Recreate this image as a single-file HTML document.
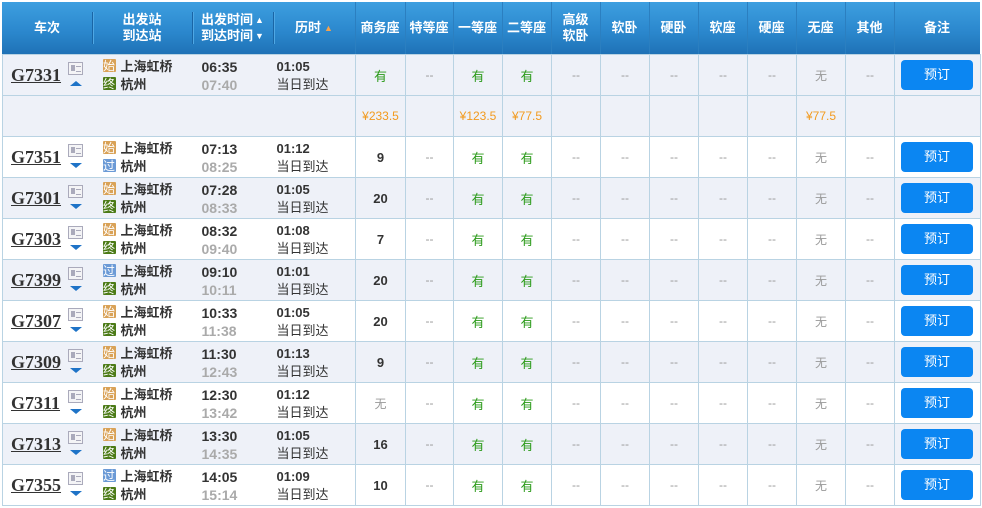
<!DOCTYPE html>
<html><head><meta charset="utf-8"><style>
*{margin:0;padding:0;box-sizing:border-box}
body{width:982px;height:508px;background:#fff;overflow:hidden;font-family:"Liberation Sans","Noto Sans CJK SC",sans-serif;position:relative}
.hd{position:absolute;left:2px;top:2px;width:978px;height:52px;background:linear-gradient(#3d9fe0,#2a86cc 60%,#1f72b6);}
.hc{position:absolute;top:0;height:52px;display:flex;align-items:center;justify-content:center;text-align:center;color:#fff;font-weight:bold;font-size:13px;line-height:16px}
.sep{position:absolute;top:10px;width:1px;height:32px;background:#1a65a5;box-shadow:1px 0 0 #4fa8e4}
.hsep{position:absolute;top:0;width:1px;height:52px;background:#2b7fc0}
table{position:absolute;left:2px;top:54px;border-collapse:collapse;table-layout:fixed;width:978px}
td{height:41px;border-top:1px solid #b9d3e3;border-bottom:1px solid #b9d3e3;font-size:12px;color:#999;text-align:center;padding:0;vertical-align:middle}
td.s{border-left:1px solid #b9d3e3}
tr.l td{background:#eef1f8}
.g{color:#2a9a18;font-size:13px}
.n{color:#333;font-weight:bold;font-size:13px}
.p{color:#f29a1e;font-size:12px}
.tn{position:relative;text-align:left}
.tn b{position:absolute;left:8px;top:10px;font-family:"Liberation Serif",serif;font-weight:bold;font-size:18px;color:#333;text-decoration:underline}
.ic{position:absolute;left:65px;top:7px;width:15px;height:13px;border:1px solid #aab;background:#f4f4f6}
.ic:before{content:"";position:absolute;left:2px;top:2px;width:4px;height:6px;background:#aab}
.ic:after{content:"";position:absolute;left:7px;top:3px;width:5px;height:4px;border-top:1px solid #aab;border-bottom:1px solid #aab}
.ar{position:absolute;left:67px;top:26px;width:0;height:0;border-left:6px solid transparent;border-right:6px solid transparent;border-top:5px solid #1e73c7}
.ar.u{border-top:0;border-bottom:5px solid #1e73c7}
.st{text-align:left;position:relative}
.st div{position:absolute;left:10px;font-size:13px;font-weight:bold;color:#333;line-height:18px;white-space:nowrap}
.st div:first-child{top:3px}.st div:last-child{top:21px}
.bg{display:inline-block;width:13px;height:13px;color:#fff;font-size:12px;line-height:13px;text-align:center;margin-right:5px;vertical-align:-1px;font-weight:normal;border-radius:1px;font-family:"Noto Sans CJK SC",sans-serif;overflow:hidden}
.b1{background:#d9a257}.b2{background:#4c7b17}.b3{background:#6b9ad6}
.tm{text-align:left;position:relative}
.tm div{position:absolute;left:9px;font-size:14px;font-weight:bold;line-height:18px}
.tm div:first-child{top:3px;color:#333}.tm div:last-child{top:21px;color:#aaa}
.du{text-align:left;position:relative}
.du div{position:absolute;left:3px;line-height:18px;color:#333}
.du div:first-child{top:3px;font-weight:bold;font-size:13px}.du div:last-child{top:21px;font-size:13px}
.btn{display:block;margin:0 auto 0 6px;width:72px;height:30px;background:#0b86f2;color:#fff;border-radius:4px;line-height:30px;font-size:13px}
</style></head><body>
<div class="hd">
<div class="hc" style="left:0;width:90px">车次</div>
<div class="sep" style="left:90px"></div>
<div class="hc" style="left:90px;width:100px">出发站<br>到达站</div>
<div class="sep" style="left:190px"></div>
<div class="hc" style="left:190px;width:81px"><span>出发时间<br>到达时间</span><span style="font-size:9px;line-height:16px;margin-left:2px">▲<br>▼</span></div>
<div class="sep" style="left:271px"></div>
<div class="hc" style="left:271px;width:82px">历时 <span style="color:#f7a24c;font-size:9px;margin-left:3px">▲</span></div>
<div class="hsep" style="left:353px"></div>
<div class="hc" style="left:353px;width:50px">商务座</div><div class="hsep" style="left:403px"></div>
<div class="hc" style="left:403px;width:48px">特等座</div><div class="hsep" style="left:451px"></div>
<div class="hc" style="left:451px;width:49px">一等座</div><div class="hsep" style="left:500px"></div>
<div class="hc" style="left:500px;width:49px">二等座</div><div class="hsep" style="left:549px"></div>
<div class="hc" style="left:549px;width:49px">高级<br>软卧</div><div class="hsep" style="left:598px"></div>
<div class="hc" style="left:598px;width:49px">软卧</div><div class="hsep" style="left:647px"></div>
<div class="hc" style="left:647px;width:49px">硬卧</div><div class="hsep" style="left:696px"></div>
<div class="hc" style="left:696px;width:49px">软座</div><div class="hsep" style="left:745px"></div>
<div class="hc" style="left:745px;width:49px">硬座</div><div class="hsep" style="left:794px"></div>
<div class="hc" style="left:794px;width:49px">无座</div><div class="hsep" style="left:843px"></div>
<div class="hc" style="left:843px;width:49px">其他</div><div class="hsep" style="left:892px"></div>
<div class="hc" style="left:892px;width:86px">备注</div>
</div>
<table>
<colgroup><col style="width:90px"><col style="width:100px"><col style="width:81px"><col style="width:82px"><col style="width:50px"><col style="width:48px"><col style="width:49px"><col style="width:49px"><col style="width:49px"><col style="width:49px"><col style="width:49px"><col style="width:49px"><col style="width:49px"><col style="width:49px"><col style="width:49px"><col style="width:86px"></colgroup>
<tr class="l"><td class="tn" style="border-left:1px solid #b9d3e3"><b>G7331</b><i class="ic"></i><i class="ar u"></i></td><td class="st"><div><span class="bg b1">始</span>上海虹桥</div><div><span class="bg b2">终</span>杭州</div></td><td class="tm"><div>06:35</div><div>07:40</div></td><td class="du"><div>01:05</div><div>当日到达</div></td><td class="s g">有</td><td class="s">--</td><td class="s g">有</td><td class="s g">有</td><td class="s">--</td><td class="s">--</td><td class="s">--</td><td class="s">--</td><td class="s">--</td><td class="s">无</td><td class="s">--</td><td class="s" style="border-right:1px solid #b9d3e3"><span class="btn">预订</span></td></tr>
<tr class="l"><td style="border-left:1px solid #b9d3e3"></td><td></td><td></td><td></td><td class="s p">¥233.5</td><td class="s"></td><td class="s p">¥123.5</td><td class="s p">¥77.5</td><td class="s"></td><td class="s"></td><td class="s"></td><td class="s"></td><td class="s"></td><td class="s p">¥77.5</td><td class="s"></td><td class="s" style="border-right:1px solid #b9d3e3"></td></tr>
<tr><td class="tn" style="border-left:1px solid #b9d3e3"><b>G7351</b><i class="ic"></i><i class="ar"></i></td><td class="st"><div><span class="bg b1">始</span>上海虹桥</div><div><span class="bg b3">过</span>杭州</div></td><td class="tm"><div>07:13</div><div>08:25</div></td><td class="du"><div>01:12</div><div>当日到达</div></td><td class="s n">9</td><td class="s">--</td><td class="s g">有</td><td class="s g">有</td><td class="s">--</td><td class="s">--</td><td class="s">--</td><td class="s">--</td><td class="s">--</td><td class="s">无</td><td class="s">--</td><td class="s" style="border-right:1px solid #b9d3e3"><span class="btn">预订</span></td></tr>
<tr class="l"><td class="tn" style="border-left:1px solid #b9d3e3"><b>G7301</b><i class="ic"></i><i class="ar"></i></td><td class="st"><div><span class="bg b1">始</span>上海虹桥</div><div><span class="bg b2">终</span>杭州</div></td><td class="tm"><div>07:28</div><div>08:33</div></td><td class="du"><div>01:05</div><div>当日到达</div></td><td class="s n">20</td><td class="s">--</td><td class="s g">有</td><td class="s g">有</td><td class="s">--</td><td class="s">--</td><td class="s">--</td><td class="s">--</td><td class="s">--</td><td class="s">无</td><td class="s">--</td><td class="s" style="border-right:1px solid #b9d3e3"><span class="btn">预订</span></td></tr>
<tr><td class="tn" style="border-left:1px solid #b9d3e3"><b>G7303</b><i class="ic"></i><i class="ar"></i></td><td class="st"><div><span class="bg b1">始</span>上海虹桥</div><div><span class="bg b2">终</span>杭州</div></td><td class="tm"><div>08:32</div><div>09:40</div></td><td class="du"><div>01:08</div><div>当日到达</div></td><td class="s n">7</td><td class="s">--</td><td class="s g">有</td><td class="s g">有</td><td class="s">--</td><td class="s">--</td><td class="s">--</td><td class="s">--</td><td class="s">--</td><td class="s">无</td><td class="s">--</td><td class="s" style="border-right:1px solid #b9d3e3"><span class="btn">预订</span></td></tr>
<tr class="l"><td class="tn" style="border-left:1px solid #b9d3e3"><b>G7399</b><i class="ic"></i><i class="ar"></i></td><td class="st"><div><span class="bg b3">过</span>上海虹桥</div><div><span class="bg b2">终</span>杭州</div></td><td class="tm"><div>09:10</div><div>10:11</div></td><td class="du"><div>01:01</div><div>当日到达</div></td><td class="s n">20</td><td class="s">--</td><td class="s g">有</td><td class="s g">有</td><td class="s">--</td><td class="s">--</td><td class="s">--</td><td class="s">--</td><td class="s">--</td><td class="s">无</td><td class="s">--</td><td class="s" style="border-right:1px solid #b9d3e3"><span class="btn">预订</span></td></tr>
<tr><td class="tn" style="border-left:1px solid #b9d3e3"><b>G7307</b><i class="ic"></i><i class="ar"></i></td><td class="st"><div><span class="bg b1">始</span>上海虹桥</div><div><span class="bg b2">终</span>杭州</div></td><td class="tm"><div>10:33</div><div>11:38</div></td><td class="du"><div>01:05</div><div>当日到达</div></td><td class="s n">20</td><td class="s">--</td><td class="s g">有</td><td class="s g">有</td><td class="s">--</td><td class="s">--</td><td class="s">--</td><td class="s">--</td><td class="s">--</td><td class="s">无</td><td class="s">--</td><td class="s" style="border-right:1px solid #b9d3e3"><span class="btn">预订</span></td></tr>
<tr class="l"><td class="tn" style="border-left:1px solid #b9d3e3"><b>G7309</b><i class="ic"></i><i class="ar"></i></td><td class="st"><div><span class="bg b1">始</span>上海虹桥</div><div><span class="bg b2">终</span>杭州</div></td><td class="tm"><div>11:30</div><div>12:43</div></td><td class="du"><div>01:13</div><div>当日到达</div></td><td class="s n">9</td><td class="s">--</td><td class="s g">有</td><td class="s g">有</td><td class="s">--</td><td class="s">--</td><td class="s">--</td><td class="s">--</td><td class="s">--</td><td class="s">无</td><td class="s">--</td><td class="s" style="border-right:1px solid #b9d3e3"><span class="btn">预订</span></td></tr>
<tr><td class="tn" style="border-left:1px solid #b9d3e3"><b>G7311</b><i class="ic"></i><i class="ar"></i></td><td class="st"><div><span class="bg b1">始</span>上海虹桥</div><div><span class="bg b2">终</span>杭州</div></td><td class="tm"><div>12:30</div><div>13:42</div></td><td class="du"><div>01:12</div><div>当日到达</div></td><td class="s">无</td><td class="s">--</td><td class="s g">有</td><td class="s g">有</td><td class="s">--</td><td class="s">--</td><td class="s">--</td><td class="s">--</td><td class="s">--</td><td class="s">无</td><td class="s">--</td><td class="s" style="border-right:1px solid #b9d3e3"><span class="btn">预订</span></td></tr>
<tr class="l"><td class="tn" style="border-left:1px solid #b9d3e3"><b>G7313</b><i class="ic"></i><i class="ar"></i></td><td class="st"><div><span class="bg b1">始</span>上海虹桥</div><div><span class="bg b2">终</span>杭州</div></td><td class="tm"><div>13:30</div><div>14:35</div></td><td class="du"><div>01:05</div><div>当日到达</div></td><td class="s n">16</td><td class="s">--</td><td class="s g">有</td><td class="s g">有</td><td class="s">--</td><td class="s">--</td><td class="s">--</td><td class="s">--</td><td class="s">--</td><td class="s">无</td><td class="s">--</td><td class="s" style="border-right:1px solid #b9d3e3"><span class="btn">预订</span></td></tr>
<tr><td class="tn" style="border-left:1px solid #b9d3e3"><b>G7355</b><i class="ic"></i><i class="ar"></i></td><td class="st"><div><span class="bg b3">过</span>上海虹桥</div><div><span class="bg b2">终</span>杭州</div></td><td class="tm"><div>14:05</div><div>15:14</div></td><td class="du"><div>01:09</div><div>当日到达</div></td><td class="s n">10</td><td class="s">--</td><td class="s g">有</td><td class="s g">有</td><td class="s">--</td><td class="s">--</td><td class="s">--</td><td class="s">--</td><td class="s">--</td><td class="s">无</td><td class="s">--</td><td class="s" style="border-right:1px solid #b9d3e3"><span class="btn">预订</span></td></tr>
</table>
</body></html>
